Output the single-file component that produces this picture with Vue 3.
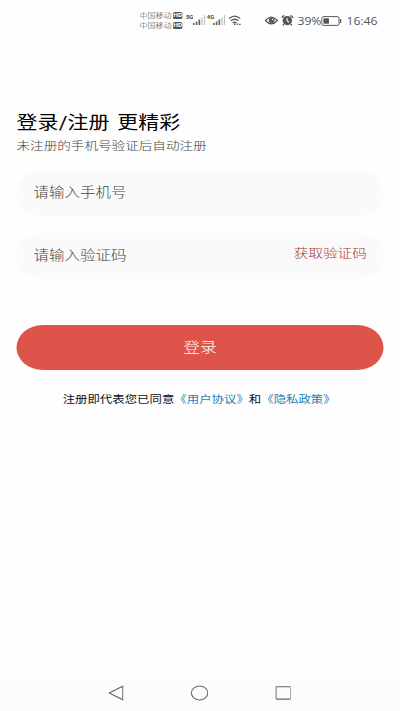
<template>
  <div class="screen">
    <div class="status">
      <div class="carriers">
        <div v-for="n in 2" :key="n" class="carrier">中国移动<span class="hd">HD</span></div>
      </div>
      <div v-for="net in networks" :key="net" class="net">
        <span class="gen">{{ net }}</span>
        <svg class="signal" viewBox="0 0 13 10" preserveAspectRatio="none">
          <path d="M0 8h1.7v2H0zM2.8 6.5h1.7V10H2.8zM5.6 4.5h1.7V10H5.6z" fill="#666" />
          <path d="M8.5 2.4h1.3V10H8.5zM11 0h1.3v10H11z" fill="#c4c4c4" />
        </svg>
      </div>
      <svg class="wifi" viewBox="0 0 14 11" preserveAspectRatio="none" fill="none" stroke="#555" stroke-width="1.3">
        <path d="M.8 3.4Q6.5-1.3 12.4 3.4M2.7 5.8q4-3.1 7.8 0M4.6 8q2-1.5 3.8 0" />
        <path d="M5.8 9.4h1.6M8.6 9.2h1.6M11.2 9.4h1.6" />
      </svg>
      <svg class="eye" viewBox="0 0 14 9" preserveAspectRatio="none" fill="none" stroke="#555">
        <path d="M.7 4.5Q6.8-2.2 13.1 4.5 6.8 11.2 .7 4.5z" stroke-width="1.2" />
        <circle cx="7.2" cy="4.3" r="2.5" fill="#555" />
        <circle cx="8" cy="3.4" r=".7" fill="#fff" stroke="none" />
      </svg>
      <svg class="alarm" viewBox="0 0 12 11" preserveAspectRatio="none">
        <circle cx="6" cy="5.6" r="4.6" fill="#555" />
        <path d="M.7 3Q1 .9 3.2.7M11.3 3Q11 .9 8.8.7M2.8 9l-1.2 1.4M9.2 9l1.2 1.4" fill="none" stroke="#555" stroke-width="1.3" />
        <path d="M5.8 3v3l2 1.4" fill="none" stroke="#fff" />
      </svg>
      <span class="percent">39%</span>
      <svg class="battery" viewBox="0 0 21 10" preserveAspectRatio="none">
        <rect x=".6" y=".6" width="17.6" height="8.8" rx="1.8" fill="none" stroke="#555" />
        <rect x="2.3" y="2.3" width="5.6" height="5.4" fill="#555" />
        <path d="M19.2 3h1.2v4h-1.2z" fill="#555" />
      </svg>
      <span class="clock">16:46</span>
    </div>

    <div class="content">
      <h1 class="title">登录/注册 更精彩</h1>
      <p class="subtitle">未注册的手机号验证后自动注册</p>
      <div class="field">
        <input v-model="phone" class="input" type="tel" placeholder="请输入手机号">
      </div>
      <div class="field">
        <input v-model="code" class="input" type="text" placeholder="请输入验证码">
        <span class="get-code">获取验证码</span>
      </div>
      <button class="login">登录</button>
      <p class="terms">注册即代表您已同意<a>《用户协议》</a>和<a>《隐私政策》</a></p>
    </div>

    <div class="nav">
      <svg class="back" viewBox="0 0 16 16" preserveAspectRatio="none"><path d="M14.6 1.2v13.6L1 8z" /></svg>
      <svg class="home" viewBox="0 0 18 16" preserveAspectRatio="none"><ellipse cx="9" cy="8" rx="8.2" ry="7" /></svg>
      <svg class="recent" viewBox="0 0 16 14" preserveAspectRatio="none"><rect x=".7" y=".7" width="14.6" height="12.4" rx=".6" /></svg>
    </div>
  </div>
</template>

<script setup>
import { ref } from 'vue'

const phone = ref('')
const code = ref('')
const networks = ['5G', '4G']
</script>

<style>
body {
  margin: 0;
  overflow: hidden;
  background: #fff;
}
</style>

<style scoped>
/* laid out 340 wide and stretched to the full 400 */
.screen {
  width: 340px;
  height: 711px;
  display: flex;
  flex-direction: column;
  background: #fefefe;
  font-family: Roboto, "Noto Sans CJK SC", sans-serif;
  font-weight: 300;
  transform: scaleX(1.17647);
  transform-origin: 0 0;
}

.status {
  display: flex;
  align-items: center;
  height: 41px;
  padding-left: 118.5px;
  color: #444;
  white-space: nowrap;
}

.status svg {
  flex: none;
}

.carriers {
  width: 37px;
  margin-right: 2.5px;
}

.carrier {
  display: flex;
  align-items: center;
  height: 10px;
  font-size: 6.8px;
  line-height: 10px;
}

.hd {
  margin-left: 1px;
  padding: 0 .6px;
  border-radius: 1.5px;
  background: #555;
  color: #fff;
  font-size: 5.6px;
  font-weight: 700;
  line-height: 7px;
}

.net {
  display: flex;
  width: 17.8px;
  height: 11px;
}

.gen {
  width: 5.6px;
  font-size: 5px;
  font-weight: 700;
  line-height: 4px;
}

.signal {
  width: 11px;
  height: 10px;
}

.wifi {
  width: 11.5px;
  height: 11px;
  margin-right: 20.4px;
}

.eye {
  width: 11.5px;
  height: 9px;
  margin-right: 2.5px;
}

.alarm {
  width: 10.5px;
  height: 11px;
  margin-right: 2.8px;
}

.percent,
.clock {
  color: #555;
  font-family: "Open Sans", sans-serif;
  font-size: 10.4px;
  font-weight: 400;
}

.percent {
  width: 20.7px;
}

.battery {
  width: 17.5px;
  height: 10px;
  margin-right: 3.5px;
}

.content {
  flex: 1;
  padding: 68px 14px 0;
}

.title {
  margin: 0;
  color: #000;
  font-size: 17.8px;
  font-weight: 400;
  line-height: 28px;
  letter-spacing: .15px;
  word-spacing: 1.8px;
}

.subtitle {
  margin: -1px 0 13.5px;
  color: #444;
  font-size: 11.55px;
  line-height: 20px;
}

.field {
  display: flex;
  align-items: center;
  height: 46px;
  margin-bottom: 17px;
  padding: 0 14.3px 0 14.5px;
  border-radius: 23px;
  box-sizing: border-box;
  background: #fafafa;
}

.input {
  flex: 1;
  min-width: 0;
  padding: 0;
  border: 0;
  outline: none;
  background: none;
  font-family: inherit;
  font-size: 13.2px;
  font-weight: 300;
}

.input::placeholder {
  color: #444;
}

.get-code {
  padding-bottom: 6px;
  color: #a63a37;
  font-size: 12.4px;
}

.login {
  display: block;
  width: 100%;
  height: 45px;
  margin: 46px 0 0;
  padding: 0 0 2px;
  border: 0;
  border-radius: 23px;
  background: #df544a;
  color: #fff;
  font-family: inherit;
  font-size: 14.2px;
  font-weight: 300;
}

.terms {
  margin: 20px 0 0;
  padding-right: 1.4px;
  color: #111;
  font-size: 10.56px;
  font-weight: 400;
  line-height: 20px;
  text-align: center;
  white-space: nowrap;
}

.terms a {
  color: #287fb6;
}

.nav {
  display: flex;
  align-items: center;
  height: 36px;
  padding-left: 91.8px;
  box-sizing: border-box;
  background: #fcfcfc;
}

.nav svg {
  fill: none;
  stroke: #666;
  stroke-width: 1.1;
}

.back {
  width: 13.6px;
  height: 16px;
}

.home {
  width: 15.3px;
  height: 16px;
  margin-left: 56.8px;
}

.recent {
  width: 13.6px;
  height: 14px;
  margin-left: 56.4px;
}
</style>
